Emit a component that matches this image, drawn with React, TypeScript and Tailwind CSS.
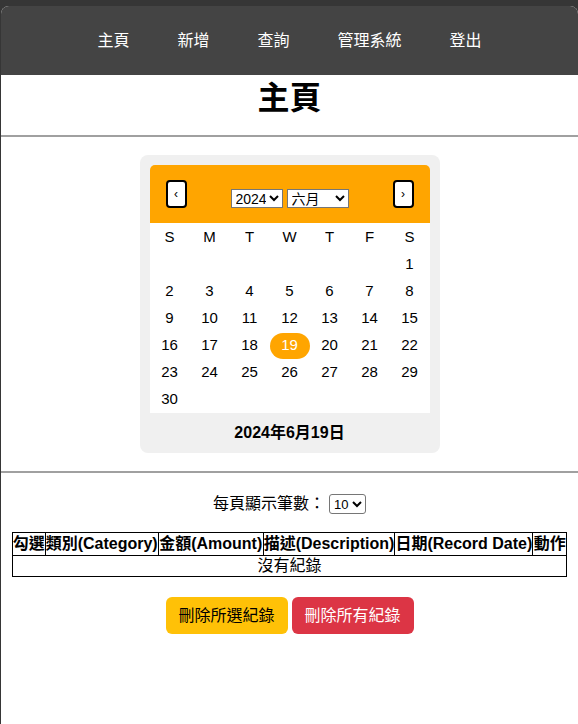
import * as React from "react";

const navItems = ["主頁", "新增", "查詢", "管理系統", "登出"];
const weekDays = ["S", "M", "T", "W", "T", "F", "S"];

// June 2024 starts on Saturday
const days: (number | null)[] = [
  ...Array(6).fill(null),
  ...Array.from({ length: 30 }, (_, i) => i + 1),
];

const columns = [
  { label: "勾選", w: "w-[33px]" },
  { label: "類別(Category)", w: "w-[113px]" },
  { label: "金額(Amount)", w: "w-[105px]" },
  { label: "描述(Description)", w: "w-[131px]" },
  { label: "日期(Record Date)", w: "w-[138px]" },
  { label: "動作", w: "w-[34px]" },
];

const font = "font-['Liberation_Sans','Noto_Sans_CJK_TC',sans-serif]";

export default function App() {
  const [selected, setSelected] = React.useState(19);

  return (
    <div className={`min-h-[724px] bg-[#363636] pt-[6px] pl-[1px] ${font}`}>
      <div className="min-h-[718px] bg-white rounded-tl-lg rounded-tr-lg overflow-hidden">
        {/* top navigation */}
        <nav className="h-[69px] bg-[#444444] flex items-center justify-center">
          {navItems.map((item) => (
            <a key={item} className="px-6 text-white text-base cursor-pointer">
              {item}
            </a>
          ))}
        </nav>

        <h1 className="h-[60px] pt-[3px] text-center text-[32px] font-bold text-black leading-[40px]">主頁</h1>
        <hr className="border-t-2 border-[#a0a0a0]" />

        {/* calendar */}
        <div className="pt-[18px] pb-[18px] flex justify-center">
          <div className="w-[300px] bg-[#f0f0f0] rounded-lg p-[10px]">
            <div className="h-[58px] bg-[#ffa500] rounded-t-[5px] flex items-center justify-between px-4">
              <button className="w-[21px] h-[28px] bg-white border-2 border-black rounded-[4px] text-[12px] leading-none text-black">
                ‹
              </button>
              <div className="flex items-center gap-1 text-[14px] mt-[8px]">
                <select defaultValue="2024" className="h-[19px] w-[52px] bg-white border border-[#767676] text-[14px] leading-none text-black">
                  <option>2024</option>
                </select>
                <select defaultValue="六月" className="h-[19px] w-[62px] bg-white border border-[#767676] text-[14px] leading-none text-black">
                  <option>六月</option>
                </select>
              </div>
              <button className="w-[21px] h-[28px] bg-white border-2 border-black rounded-[4px] text-[12px] leading-none text-black">
                ›
              </button>
            </div>
            <div className="bg-white grid grid-cols-7">
              {weekDays.map((d, i) => (
                <div key={i} className="h-[28px] flex items-center justify-center text-[15px] text-black">
                  {d}
                </div>
              ))}
              {days.map((d, i) => (
                <div key={i} className="h-[27px] flex items-center justify-center">
                  {d !== null && (
                    <span
                      onClick={() => setSelected(d)}
                      className={`w-[40px] h-[26px] flex items-center justify-center rounded-full text-[15px] cursor-pointer ${
                        d === selected ? "bg-[#ffa500] text-white" : "text-black"
                      }`}
                    >
                      {d}
                    </span>
                  )}
                </div>
              ))}
            </div>
            <div className="pt-[10px] text-center text-base font-bold text-black leading-[20px]">
              2024年6月{selected}日
            </div>
          </div>
        </div>

        <hr className="border-t-2 border-[#a0a0a0]" />

        <div className="pt-[19px] flex items-center justify-center text-base text-black">
          <span>每頁顯示筆數：</span>
          <select defaultValue="10" className="ml-[4px] h-[20px] w-[37px] border border-[#767676] rounded-[3px] text-[13px] leading-none">
            <option>10</option>
          </select>
        </div>

        <div className="pt-[16px] flex justify-center">
          <table className="border-collapse border border-black text-base text-black leading-[20px]">
            <thead>
              <tr>
                {columns.map((c) => (
                  <th key={c.label} className={`${c.w} border border-black p-0 h-[23px] font-bold whitespace-nowrap`}>
                    {c.label}
                  </th>
                ))}
              </tr>
            </thead>
            <tbody>
              <tr>
                <td colSpan={6} className="border border-black p-0 h-[21px] text-center">
                  沒有紀錄
                </td>
              </tr>
            </tbody>
          </table>
        </div>

        <div className="pt-[20px] flex justify-center gap-1">
          <button className="w-[122px] h-[37px] bg-[#ffc107] rounded-md text-base text-black">
            刪除所選紀錄
          </button>
          <button className="w-[122px] h-[37px] bg-[#dc3545] rounded-md text-base text-white">
            刪除所有紀錄
          </button>
        </div>
      </div>
    </div>
  );
}
